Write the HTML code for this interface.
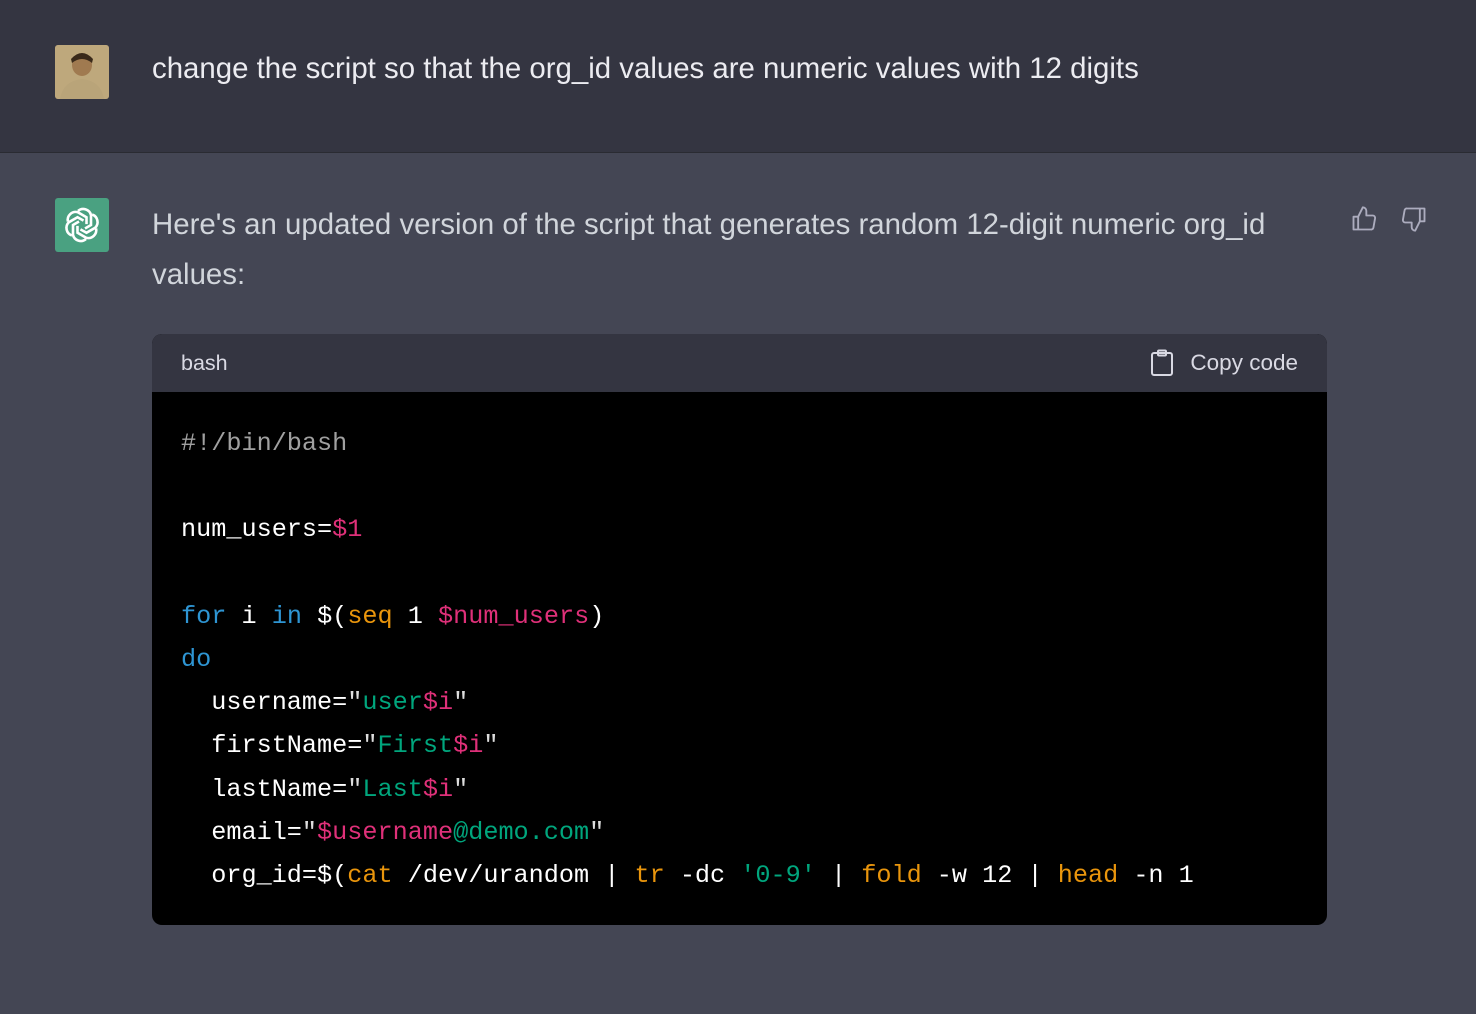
<!DOCTYPE html>
<html><head><meta charset="utf-8"><style>
*{margin:0;padding:0;box-sizing:border-box}
body{width:1476px;height:1014px;overflow:hidden;background:#444654;font-family:"Liberation Sans",sans-serif;position:relative}
.top{position:absolute;left:0;top:0;width:1476px;height:153px;background:#343541;border-bottom:1px solid #2a2b32}
.av{position:absolute;left:55px;top:45px;width:54px;height:54px;border-radius:3px}
.t1{position:absolute;left:152px;top:52px;font-size:29.4px;color:#ececf1;white-space:nowrap}
.t2{position:absolute;left:152px;top:200px;width:1150px;font-size:29.4px;line-height:50px;color:#d1d5db}
.code{position:absolute;left:152px;top:334px;width:1175px;height:591px;border-radius:10px;overflow:hidden;background:#000}
.hd{height:58px;background:#343541;color:#d9d9e3;font-size:21.5px;padding:0 29px;display:flex;align-items:center;justify-content:space-between}
.cp{display:flex;align-items:center;gap:16px;font-size:22.5px}
pre{font-family:"Liberation Mono",monospace;font-size:25.2px;line-height:43.2px;color:#fff;padding:30px 29px;}
.c{color:#a0a0a0}.k{color:#2e95d3}.v{color:#df3079}.b{color:#e9950c}.s{color:#00a67d}.q{color:#ddd}
</style></head><body>
<div class="top">
<svg class="av" viewBox="0 0 54 54"><rect width="54" height="54" fill="#b39c6e"/><rect x="0" y="0" width="54" height="54" fill="#c9b48a" opacity=".5"/><ellipse cx="27" cy="20" rx="10" ry="11" fill="#a07a50"/><path d="M16 14 Q27 2 38 14 L37 18 Q27 10 17 18Z" fill="#3a2a1a"/><path d="M5 54 Q8 36 27 34 Q46 36 49 54Z" fill="#b9a479"/></svg>
<div class="t1">change the script so that the org_id values are numeric values with 12 digits</div>
</div>
<svg style="position:absolute;left:55px;top:198px" width="54" height="54" viewBox="0 0 54 54"><rect width="54" height="54" rx="3" fill="#4aa181"/>
<g fill="none" stroke="#fff" stroke-width="2.6" transform="translate(27 27)">
<g id="p"><path d="M-4 -14 a8 8 0 0 1 13 4 l0 10 l-6 3.5"/></g>
<use href="#p" transform="rotate(60)"/><use href="#p" transform="rotate(120)"/><use href="#p" transform="rotate(180)"/><use href="#p" transform="rotate(240)"/><use href="#p" transform="rotate(300)"/>
</g></svg>
<div class="t2">Here's an updated version of the script that generates random 12-digit numeric org_id values:</div>
<svg style="position:absolute;left:1350px;top:205px" width="28" height="28" viewBox="0 0 24 24" fill="none" stroke="#acacbe" stroke-width="1.6" stroke-linejoin="round"><path d="M7 10v11H3V10zM7 10l4-8a3 3 0 0 1 3 3v4h5.5a2 2 0 0 1 2 2.3l-1.4 8A2 2 0 0 1 18 21H7"/></svg>
<svg style="position:absolute;left:1400px;top:205px" width="28" height="28" viewBox="0 0 24 24" fill="none" stroke="#acacbe" stroke-width="1.6" stroke-linejoin="round"><path d="M17 14V3h4v11zM17 14l-4 8a3 3 0 0 1-3-3v-4H4.5a2 2 0 0 1-2-2.3l1.4-8A2 2 0 0 1 6 3h11"/></svg>
<div class="code">
<div class="hd"><span>bash</span><span class="cp"><svg width="24" height="28" viewBox="0 0 24 28" fill="none" stroke="#d9d9e3" stroke-width="2"><rect x="2" y="4" width="20" height="22" rx="2"/><rect x="8" y="1.5" width="8" height="5" rx="1"/></svg>Copy code</span></div>
<pre><span class="c">#!/bin/bash</span>

num_users=<span class="v">$1</span>

<span class="k">for</span> i <span class="k">in</span> $(<span class="b">seq</span> 1 <span class="v">$num_users</span>)
<span class="k">do</span>
  username=<span class="q">"</span><span class="s">user</span><span class="v">$i</span><span class="q">"</span>
  firstName=<span class="q">"</span><span class="s">First</span><span class="v">$i</span><span class="q">"</span>
  lastName=<span class="q">"</span><span class="s">Last</span><span class="v">$i</span><span class="q">"</span>
  email=<span class="q">"</span><span class="v">$username</span><span class="s">@demo.com</span><span class="q">"</span>
  org_id=$(<span class="b">cat</span> /dev/urandom | <span class="b">tr</span> -dc <span class="s">'0-9'</span> | <span class="b">fold</span> -w 12 | <span class="b">head</span> -n 1</pre>
</div>
</body></html>
